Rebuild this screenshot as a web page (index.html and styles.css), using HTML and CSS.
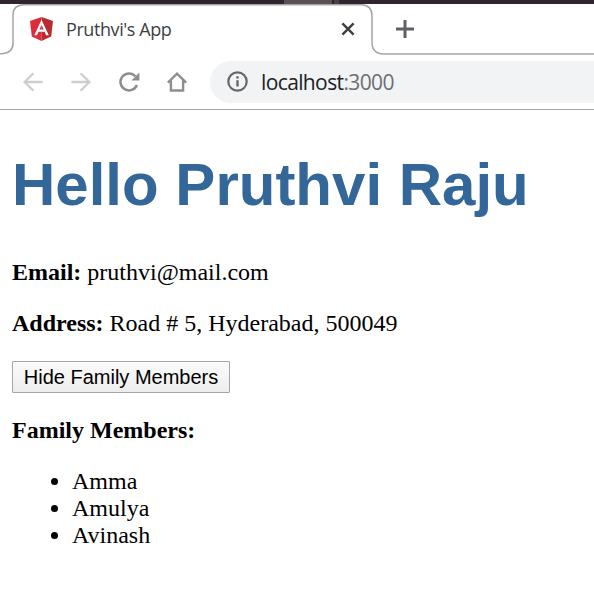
FILE: index.html
```html
<!DOCTYPE html>
<html lang="en">
<head>
<meta charset="utf-8">
<title>Pruthvi's App</title>
<link rel="stylesheet" href="styles.css">
</head>
<body>
<div class="desktop-edge"><span class="edge-light"></span><span class="edge-mid"></span></div>
<header class="tab-strip">
  <svg class="tab-outline" width="594" height="52" viewBox="0 4 594 52" fill="none" stroke="#a5a5a5" stroke-width="1.5">
    <path d="M0 53.7H2Q13 53 13 43V15Q13 5 24 4.8H361Q372 5 372 16V42Q372 54 384 54H594"/>
  </svg>
  <svg class="logo" width="23" height="24" viewBox="0 0 23 24">
    <path fill="#dd2c37" d="M11.5 0 0 4 1.8 19.4 11.5 24Z"/>
    <path fill="#b92b33" d="M11.5 0 23 4 21.2 19.4 11.5 24Z"/>
    <path fill="#fff" fill-rule="evenodd" d="M11.5 2.8 4.3 18.2H7L8.5 14.7H14.6L16.1 18.2H18.8ZM11.5 7.7 13.7 12.5H9.4Z"/>
  </svg>
  <span class="tab-title">Pruthvi's App</span>
  <svg class="close" width="14" height="14" viewBox="0 0 14 14" fill="none" stroke="#3c4043" stroke-width="2.4"><path d="M1.4 1.4 12.6 12.6M12.6 1.4 1.4 12.6"/></svg>
  <svg class="plus" width="18" height="18" viewBox="0 0 18 18" fill="none" stroke="#5f6063" stroke-width="3"><path d="M9 0V18M0 9H18"/></svg>
</header>
<nav class="toolbar">
  <svg class="nav-icon" width="20" height="20" viewBox="0 0 20 20" fill="none" stroke="#cdcdcd" stroke-width="2.3"><path d="M19.6 10H1.6M10.4 1.2 1.6 10 10.4 18.8"/></svg>
  <svg class="nav-icon" width="20" height="20" viewBox="0 0 20 20" fill="none" stroke="#cdcdcd" stroke-width="2.3"><path d="M.4 10H18.4M9.6 1.2 18.4 10 9.6 18.8"/></svg>
  <svg class="nav-icon reload" width="22" height="20" viewBox="0 0 22 20" fill="none" stroke="#8e8e8e" stroke-width="2.5"><path d="M16.4 4.3A8.5 8.5 0 1 0 17.9 13"/><path fill="#8e8e8e" stroke="none" d="M20.4 .6V8.6H12.4Z"/></svg>
  <svg class="nav-icon home" width="20" height="20" viewBox="0 0 20 20" fill="none" stroke="#8e8e8e" stroke-width="2.4"><path d="M.8 10.6 10 1.7 19.2 10.6M3.9 8.5V18.5H16.1V8.5"/></svg>
  <div class="address">
    <svg class="info" width="21" height="21" viewBox="0 0 21 21"><circle cx="10.5" cy="10.5" r="9.2" fill="none" stroke="#65686b" stroke-width="2.2"/><path fill="#65686b" d="M9.3 5.3h2.4v2.3H9.3zM9.3 9.2h2.4v6.4H9.3z"/></svg>
    <span class="url">localhost<span class="port">:3000</span></span>
  </div>
</nav>
<main>
  <h1>Hello Pruthvi Raju</h1>
  <p><strong>Email:</strong> pruthvi@mail.com</p>
  <p><strong>Address:</strong> Road # 5, Hyderabad, 500049</p>
  <button type="button">Hide Family Members</button>
  <p class="family"><strong>Family Members:</strong></p>
  <ul><li>Amma</li><li>Amulya</li><li>Avinash</li></ul>
</main>
</body>
</html>
```

FILE: styles.css
```css
* { box-sizing: border-box; }
html, body { height: 100%; }
body {
  margin: 0;
  overflow: hidden;
  background: #fff;
  color: #000;
  font: 24px/27px "Liberation Serif", "Times New Roman", serif;
}
svg { display: block; flex: none; }
.desktop-edge { display: flex; height: 4px; padding-left: 284px; background: #30252c; }
.edge-light { width: 48px; background: #5a5056; }
.edge-mid { width: 5px; margin-left: 2px; background: #493f45; }
.tab-strip { position: relative; display: flex; height: 50px; padding-left: 30px; }
.tab-outline { position: absolute; left: 0; top: 0; }
.logo { margin-top: 13px; }
.tab-title {
  width: 276px;
  margin: 12px 0 0 13px;
  color: #3c4043;
  font: 18px/26px "Open Sans", sans-serif;
  letter-spacing: -0.42px;
}
.close { margin-top: 18px; margin-left: -1px; }
.plus { margin-top: 16px; margin-left: 41px; }
.toolbar {
  display: flex;
  align-items: center;
  height: 56px;
  padding-left: 23px;
  border-bottom: 1px solid #a5a5a5;
}
.nav-icon { margin-right: 28px; }
.reload { margin-right: 26px; }
.home { margin-right: 23px; }
.address {
  display: flex;
  align-items: center;
  flex: 1;
  height: 42px;
  padding-left: 17px;
  border-radius: 21px 0 0 21px;
  background: #f1f3f4;
}
.url {
  margin-left: 13px;
  color: #202124;
  font: 21px/30px "Open Sans", sans-serif;
  letter-spacing: -0.62px;
}
.port { color: #6b6e72; }
main { padding: 41px 12px 0; }
h1 {
  margin: 0 0 40px;
  color: #369;
  font: bold 60px/68px "Liberation Sans", Arial, sans-serif;
}
p { margin: 0 0 24px; }
button {
  display: block;
  width: 218px;
  height: 32px;
  padding: 0;
  border: 1px solid #a6a6a6;
  border-radius: 1px;
  background: linear-gradient(#fbfbfb, #ededed);
  color: #000;
  font: 20px/30px "Liberation Sans", Arial, sans-serif;
}
.family { margin-top: 24px; }
ul { margin: 0; padding-left: 60px; }
```
